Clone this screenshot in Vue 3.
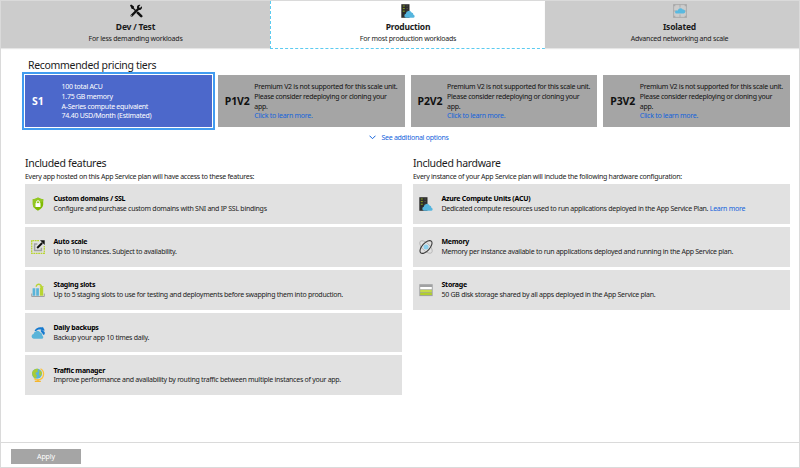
<script setup>
const tabs = [
  { name: 'Dev / Test', note: 'For less demanding workloads', icon: 'tools' },
  { name: 'Production', note: 'For most production workloads', icon: 'server', active: true },
  { name: 'Isolated', note: 'Advanced networking and scale', icon: 'isolated' },
]
const unsupported = ['Premium V2 is not supported for this scale unit.', 'Please consider redeploying or cloning your', 'app.']
const tiers = [
  { name: 'S1', active: true, lines: ['100 total ACU', '1.75 GB memory', 'A-Series compute equivalent', '74.40 USD/Month (Estimated)'] },
  { name: 'P1V2', lines: unsupported, link: 'Click to learn more.' },
  { name: 'P2V2', lines: unsupported, link: 'Click to learn more.' },
  { name: 'P3V2', lines: unsupported, link: 'Click to learn more.' },
]
const columns = [
  {
    title: 'Included features',
    intro: 'Every app hosted on this App Service plan will have access to these features:',
    items: [
      { icon: 'shield', title: 'Custom domains / SSL', text: 'Configure and purchase custom domains with SNI and IP SSL bindings' },
      { icon: 'scale', title: 'Auto scale', text: 'Up to 10 instances. Subject to availability.' },
      { icon: 'slots', title: 'Staging slots', text: 'Up to 5 staging slots to use for testing and deployments before swapping them into production.' },
      { icon: 'backup', title: 'Daily backups', text: 'Backup your app 10 times daily.' },
      { icon: 'globe', title: 'Traffic manager', text: 'Improve performance and availability by routing traffic between multiple instances of your app.' },
    ],
  },
  {
    title: 'Included hardware',
    intro: 'Every instance of your App Service plan will include the following hardware configuration:',
    items: [
      { icon: 'server', title: 'Azure Compute Units (ACU)', text: 'Dedicated compute resources used to run applications deployed in the App Service Plan.', link: 'Learn more' },
      { icon: 'memory', title: 'Memory', text: 'Memory per instance available to run applications deployed and running in the App Service plan.' },
      { icon: 'storage', title: 'Storage', text: '50 GB disk storage shared by all apps deployed in the App Service plan.' },
    ],
  },
]
</script>

<template>
  <svg class="defs" width="0" height="0" aria-hidden="true">
    <symbol id="tools" viewBox="0 0 14 14">
      <path d="M2.6 11.6 9.6 4.6" stroke="#111" stroke-width="2.2" stroke-linecap="round" />
      <path d="M12.9 2.3 10.9 4.1 9.7 3 11.4 1C9.6.4 7.7 1.8 8 3.9L10.1 6c2 .3 3.5-1.7 2.8-3.7Z" fill="#111" />
      <path d="M1 1.2 2.2.4 5 2.6 4.9 4 8.3 7.2 7.2 8.3 4 5 2.8 5Z" fill="#111" />
      <path d="m8.9 8.9 3.3 3.3" stroke="#111" stroke-width="2.6" stroke-linecap="round" />
      <circle cx="2.5" cy="11.7" r=".55" fill="#ccc" />
    </symbol>
    <symbol id="server" viewBox="0 0 14 14">
      <path d="M.3.2h8.2v13.6H.3z" fill="#2d2d2d" />
      <path d="M1.8 2h2M1.8 4.6h2M1.8 7.2h2" stroke="#89a51c" stroke-width="1" />
      <path d="M5.6 2h1M5.6 4.6h1M5.6 7.2h1" stroke="#777" stroke-width=".7" />
      <path d="M5.2 13.8a2.1 2.1 0 0 1-.4-4.1 3.1 3.1 0 0 1 5.8-1.3 2.2 2.2 0 0 1 1.8 2.3 1.6 1.6 0 0 1 .1 3.1Z" fill="#55b5de" />
    </symbol>
    <symbol id="isolated" viewBox="0 0 14 14">
      <path d="M.6.6h12.8v12.8H.6zM7 .6v3M7 10.4v3M.6 7h3M10.4 7h3" fill="none" stroke="#a4a4a4" stroke-width=".8" />
      <path d="M.3.3h2v2h-2zM11.7.3h2v2h-2zM.3 11.7h2v2h-2zM11.7 11.7h2v2h-2z" fill="#aaa" />
      <path d="M3.5 9.600a1.500 1.500 0 0 1 .1-3l1.200-.2a2.700 2.700 0 0 1 5-.8 2 2 0 0 1 .8 4Z" fill="#59b9e0" />
    </symbol>
    <symbol id="shield" viewBox="0 0 14 14">
      <path d="M7 .5c1.8 1.1 3.4 1.5 5.2 1.6v5.2c0 3.1-2.5 5-5.2 6.4-2.7-1.4-5.2-3.3-5.2-6.4V2.1C3.6 2 5.2 1.6 7 .5Z" fill="#7fba00" />
      <path d="M7 .5c1.8 1.1 3.4 1.5 5.2 1.6v2L3 10.9C2.300 9.900 1.800 8.700 1.800 7.300V2.100C3.600 2 5.200 1.600 7 .5Z" fill="#92c721" />
      <path d="M4.500 6.100h5v3.900h-5z" fill="#fff" />
      <path d="M5.500 6.300V5.200a1.500 1.500 0 0 1 3 0v1.100" fill="none" stroke="#fff" stroke-width=".9" />
    </symbol>
    <symbol id="scale" viewBox="0 0 14 14">
      <path d="M8 .7H.7v12.600h12.600V6" fill="none" stroke="#b8d432" stroke-width="1.300" stroke-dasharray="1.800 .6" />
      <path d="M6.300 4H3.600v6.600h6.800V7.800" fill="none" stroke="#a0a1a2" stroke-width="1.500" />
      <path d="m6.200 8 5-5" stroke="#111" stroke-width="1.900" />
      <path d="M9 .3h4.700V5Z" fill="#111" />
    </symbol>
    <symbol id="slots" viewBox="0 0 14 14">
      <path d="M.7 10.500v3h12.600v-3" fill="none" stroke="#a0a1a2" stroke-width="1" />
      <path d="M1.600 5.200h2.700v7.500H1.600zM5.200 5.200h2.700v7.500H5.200z" fill="#59b4d9" />
      <path d="M8.900 4.500h3.300v8.200H8.900z" fill="#b8d432" />
      <path d="M5.200 3.800C5.500.200 10.400.2 10.700 4.800" fill="none" stroke="#b8d432" stroke-width="1.400" />
      <path d="M8.600 3.300h4.400l-2.200 2.400Z" fill="#b8d432" />
    </symbol>
    <symbol id="backup" viewBox="0 0 14 14">
      <path d="M3.500 4.900C5 1.700 8.300.7 11.300 1.600l.5-.8 2 3.600-4.100.5.700-1.200C8.500 3.300 6.600 3.500 5.200 5.100Z" fill="#1479cf" />
      <path d="M9.300 4.800c2.200-.5 4.500.2 4.500 2.200 0 1-.5 1.600-1.200 2Z" fill="#1479cf" />
      <path d="M2.700 12.800A2.500 2.500 0 0 1 2.500 7.900a3.800 3.800 0 0 1 6.900-1.300 2.900 2.900 0 0 1 2 3.200 1.600 1.600 0 0 1-.5 3Z" fill="#59b4d9" />
    </symbol>
    <symbol id="globe" viewBox="0 0 14 14">
      <path d="M9.500.8a6 6 0 0 1-1.700 11.100A6 6 0 0 1 3 10.600" fill="none" stroke="#fcc33c" stroke-width="1.300" />
      <path d="M7 11.500v1.600M3.800 13.400h6" stroke="#f5b52b" stroke-width="1.200" />
      <circle cx="6" cy="5.700" r="5" fill="#59b4d9" />
      <path d="M1.200 4.200C2.200 1.500 5 .3 7.500 1L6.300 2.800 7 4 4.900 4.500 4.500 6 6 7.300 5 10.500C2.500 9.700.8 7 1.200 4.200ZM8.200 2.300l2.200 1.100.6 2-1.400 2.800-1.700-1.600.5-1.900Z" fill="#a9cb35" />
    </symbol>
    <symbol id="memory" viewBox="0 0 14 14">
      <ellipse cx="7" cy="7" rx="8" ry="3.800" transform="rotate(45 7 7)" fill="none" stroke="#aaa" stroke-width=".7" />
      <circle cx="7" cy="7" r="2.500" fill="#8dd0ed" />
      <ellipse cx="7" cy="7" rx="7.900" ry="3.800" transform="rotate(-48 7 7)" fill="none" stroke="#3b3b3b" stroke-width="1.100" />
    </symbol>
    <symbol id="storage" viewBox="0 0 14 14">
      <path d="M.3 1.200h13.400v11.900H.3z" fill="#a0a1a2" />
      <path d="M1.200 4h11.600v2.300H1.200z" fill="#fff" />
      <path d="M1.200 6.900h11.600v2.300H1.200z" fill="#c5dc48" />
      <path d="M1.200 9.700h11.600v2.400H1.200z" fill="#b1cf2c" />
    </symbol>
  </svg>

  <main class="page">
    <nav class="tabs">
      <div v-for="tab in tabs" :key="tab.name" class="tab" :class="{ active: tab.active }">
        <svg class="icon"><use :href="'#' + tab.icon" /></svg>
        <strong class="tab-name">{{ tab.name }}</strong>
        <span class="tab-note">{{ tab.note }}</span>
      </div>
    </nav>

    <section class="pricing">
      <h1>Recommended pricing tiers</h1>
      <div class="tiers">
        <article v-for="tier in tiers" :key="tier.name" class="tier" :class="{ active: tier.active }">
          <strong>{{ tier.name }}</strong>
          <div class="tier-lines">
            <span v-for="line in tier.lines" :key="line">{{ line }}</span>
            <a v-if="tier.link">{{ tier.link }}</a>
          </div>
        </article>
      </div>
      <a class="more">
        <svg width="7" height="5" viewBox="0 0 7 5"><path d="m.5.7 3 3 3-3" fill="none" stroke="currentColor" /></svg>
        <span>See additional options</span>
      </a>
    </section>

    <div class="columns">
      <section v-for="column in columns" :key="column.title">
        <h2>{{ column.title }}</h2>
        <p class="intro">{{ column.intro }}</p>
        <div class="items">
          <article v-for="item in column.items" :key="item.title" class="item">
            <svg class="icon"><use :href="'#' + item.icon" /></svg>
            <div class="item-copy">
              <strong>{{ item.title }}</strong>
              <span>{{ item.text }} <a v-if="item.link">{{ item.link }}</a></span>
            </div>
          </article>
        </div>
      </section>
    </div>

    <footer><button>Apply</button></footer>
  </main>
</template>

<style>
body { margin: 0; background: #fff; }
</style>

<style scoped>
.defs { display: block; }
.page {
  box-sizing: border-box;
  display: flex;
  flex-direction: column;
  width: 800px;
  height: 468px;
  overflow: hidden;
  border: 1px solid #dadada;
  background: #fff;
  color: #1b1b1b;
  font: 7px/9.7px "Noto Sans", "Open Sans", sans-serif;
  letter-spacing: -0.272px;
  white-space: nowrap;
}
.icon { display: block; flex: none; width: 14px; height: 14px; overflow: visible; }
a { color: #1464dc; }
.tabs { display: grid; grid-template-columns: 269px 275px 269px; height: 48px; flex: none; }
.tab {
  box-sizing: border-box;
  display: flex;
  flex-direction: column;
  align-items: center;
  height: 47px;
  padding-top: 3px;
  background: #ccc;
  box-shadow: 0 1px 1px #e6e6e6;
}
.tab.active {
  height: 48px;
  background: #fff;
  border-left: 1px dashed #5ccbf0;
  border-bottom: 1px dashed #5ccbf0;
  box-shadow: none;
}
.tab-name { margin-top: 2.5px; font-size: 8.5px; line-height: 12px; font-weight: 700; letter-spacing: -0.2px; }
.tab-note { margin-top: 1px; letter-spacing: -0.23px; }
.pricing { display: flex; flex-direction: column; padding: 8px 9px 0 24px; }
h1, h2 { margin: 0; font-size: 10.5px; line-height: 16px; font-weight: 400; letter-spacing: -0.32px; }
h1 { padding-left: 3px; }
.tiers { display: grid; grid-template-columns: repeat(4, minmax(0, 1fr)); gap: 6px; margin-top: 2px; }
.tier { display: flex; align-items: center; height: 52px; background: #a5a5a5; color: #111; }
.tier > strong { flex: none; width: 29.6px; padding-left: 7px; font-size: 10.5px; line-height: 14px; letter-spacing: -0.1px; }
.tier-lines { display: flex; flex-direction: column; padding-top: 1px; }
.tier.active { background: #4c68cb; color: #fff; outline: 2px solid #429cf0; outline-offset: 1px; }
.more { display: flex; align-items: center; align-self: center; gap: 5px; margin: 6px 0 0 3px; }
.columns { display: grid; grid-template-columns: 377px 377px; gap: 11px; padding: 12.500px 9px 0 24px; }
.intro { margin: 0.500px 0 2.500px; }
.items { display: flex; flex-direction: column; gap: 3px; }
.item { display: flex; align-items: center; gap: 9px; height: 39.900px; background: #e1e1e1; }
.item .icon { margin-left: 5.500px; }
.item-copy { display: flex; flex-direction: column; color: #222; }
.item-copy strong { color: #000; letter-spacing: -0.25px; }
footer { display: flex; align-items: center; height: 24px; margin-top: auto; padding: 0 10px; border-top: 1px solid #dadada; }
button { width: 70px; height: 15px; margin-top: 3px; padding: 0; border: 0; background: #a5a5a5; color: #fff; font: inherit; letter-spacing: -0.12px; }
</style>
